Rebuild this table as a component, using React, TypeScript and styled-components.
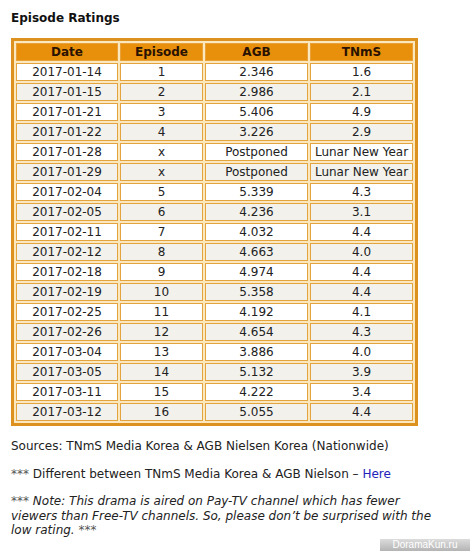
import * as React from "react";
import styled, { createGlobalStyle } from "styled-components";

const GlobalStyle = createGlobalStyle`
  html, body {
    margin: 0;
    padding: 0;
    background: #ffffff;
  }
  body {
    font-family: Verdana, "DejaVu Sans", sans-serif;
    color: #222222;
  }
`;

const Page = styled.main`
  position: relative;
  width: 470px;
  height: 551px;
  overflow: hidden;
  padding: 10px 0 0 11px;
  box-sizing: border-box;
`;

const Title = styled.h3`
  margin: 0;
  font-size: 12px;
  line-height: 17px;
  font-weight: bold;
  color: #111111;
`;

const Table = styled.table`
  margin-top: 11px;
  width: 407px;
  border: 3px solid #dd9220;
  border-collapse: separate;
  border-spacing: 2px;
  background: #fbe8bf;
  table-layout: fixed;
`;

const HeadCell = styled.th`
  height: 18px;
  padding: 0;
  box-sizing: border-box;
  border: 1px solid #e9a23a;
  background: #e8900c;
  color: #2a1200;
  font-size: 12px;
  font-weight: bold;
  text-align: center;
  line-height: 16px;
`;

const Cell = styled.td<{ $alt: boolean }>`
  height: 18px;
  padding: 0;
  box-sizing: border-box;
  border: 1px solid #e3a440;
  background: ${p => (p.$alt ? "#f2f1ec" : "#ffffff")};
  font-size: 12px;
  line-height: 16px;
  text-align: center;
  white-space: nowrap;
  color: #222222;
`;

const Para = styled.p<{ $italic?: boolean }>`
  margin: 0;
  font-size: 12px;
  line-height: 14.5px;
  color: #222222;
  font-style: ${p => (p.$italic ? "italic" : "normal")};
`;

const Stars = styled.span`
  color: #555555;
`;

const Notes = styled.section`
  margin-top: 13px;
  display: flex;
  flex-direction: column;
  gap: 13px;
`;

const HereLink = styled.a`
  color: #2222bb;
  text-decoration: none;
`;

const Watermark = styled.div`
  position: absolute;
  right: 0;
  bottom: 0;
  width: 90px;
  height: 12px;
  background: linear-gradient(to bottom, #dcdcdc, #b4b4b4);
  color: #ffffff;
  font-family: "Liberation Sans", Arial, sans-serif;
  font-size: 10px;
  line-height: 12px;
  text-align: center;
`;

const rows: [string, string, string, string][] = [
  ["2017-01-14", "1", "2.346", "1.6"],
  ["2017-01-15", "2", "2.986", "2.1"],
  ["2017-01-21", "3", "5.406", "4.9"],
  ["2017-01-22", "4", "3.226", "2.9"],
  ["2017-01-28", "x", "Postponed", "Lunar New Year"],
  ["2017-01-29", "x", "Postponed", "Lunar New Year"],
  ["2017-02-04", "5", "5.339", "4.3"],
  ["2017-02-05", "6", "4.236", "3.1"],
  ["2017-02-11", "7", "4.032", "4.4"],
  ["2017-02-12", "8", "4.663", "4.0"],
  ["2017-02-18", "9", "4.974", "4.4"],
  ["2017-02-19", "10", "5.358", "4.4"],
  ["2017-02-25", "11", "4.192", "4.1"],
  ["2017-02-26", "12", "4.654", "4.3"],
  ["2017-03-04", "13", "3.886", "4.0"],
  ["2017-03-05", "14", "5.132", "3.9"],
  ["2017-03-11", "15", "4.222", "3.4"],
  ["2017-03-12", "16", "5.055", "4.4"],
];

export default function App() {
  return (
    <Page>
      <GlobalStyle />
      <Title>Episode Ratings</Title>
      <Table>
        <colgroup>
          <col style={{ width: 102 }} />
          <col style={{ width: 83 }} />
          <col style={{ width: 103 }} />
          <col style={{ width: 103 }} />
        </colgroup>
        <thead>
          <tr>
            <HeadCell>Date</HeadCell>
            <HeadCell>Episode</HeadCell>
            <HeadCell>AGB</HeadCell>
            <HeadCell>TNmS</HeadCell>
          </tr>
        </thead>
        <tbody>
          {rows.map((r, i) => (
            <tr key={r[0]}>
              {r.map((v, j) => (
                <Cell key={j} $alt={i % 2 === 1}>
                  {v}
                </Cell>
              ))}
            </tr>
          ))}
        </tbody>
      </Table>
      <Notes>
        <Para>Sources: TNmS Media Korea &amp; AGB Nielsen Korea (Nationwide)</Para>
        <Para>
          <Stars>***</Stars> Different between TNmS Media Korea &amp; AGB Nielson –{" "}
          <HereLink href="#">Here</HereLink>
        </Para>
        <Para $italic>
          <Stars>***</Stars> Note: This drama is aired on Pay-TV channel which has fewer
          <br />
          viewers than Free-TV channels. So, please don’t be surprised with the
          <br />
          low rating. <Stars>***</Stars>
        </Para>
      </Notes>
      <Watermark>DoramaKun.ru</Watermark>
    </Page>
  );
}
